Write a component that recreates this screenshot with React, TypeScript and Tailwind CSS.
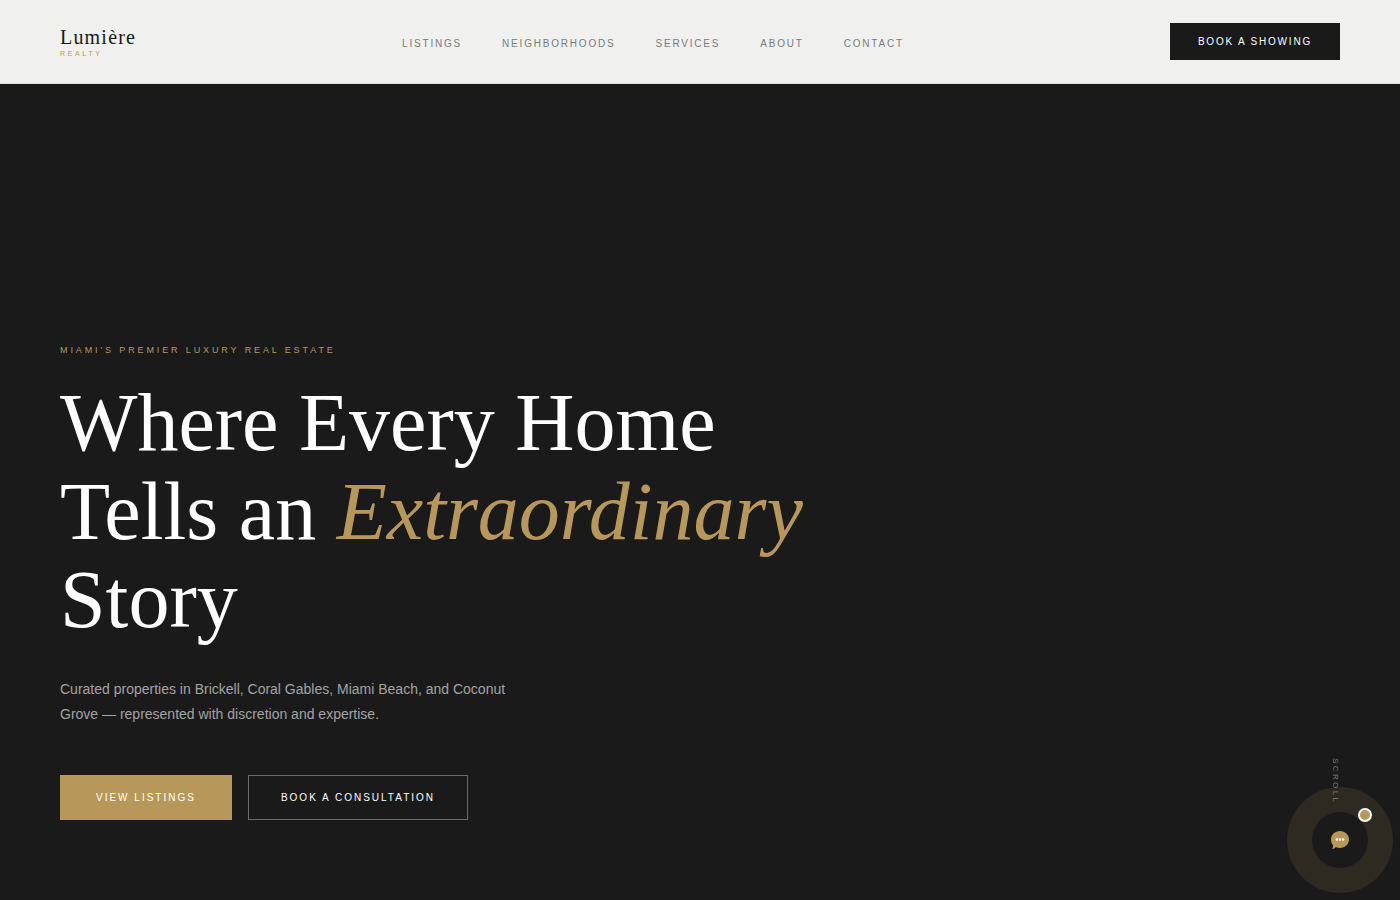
const links = ["Listings", "Neighborhoods", "Services", "About", "Contact"];

function Header() {
  return (
    <header className="flex h-21 items-center justify-between border-b border-[#e2e0dc] bg-[#f0f0ee] px-15">
      <a href="#top" className="flex flex-col">
        <span className="font-['Liberation_Serif',serif] text-[20px] leading-6 tracking-[0.06em] text-[#1a1a1a]">
          Lumière
        </span>
        <span className="text-[7px] leading-[10px] tracking-[0.38em] text-[#b8985a] uppercase">Realty</span>
      </a>
      <nav aria-label="Main" className="flex gap-10 pt-1">
        {links.map((label) => (
          <a
            key={label}
            href={`#${label.toLowerCase()}`}
            className="text-[10px] leading-4 tracking-[0.18em] text-[#7a7a7a] uppercase"
          >
            {label}
          </a>
        ))}
      </nav>
      <button
        type="button"
        className="bg-[#1a1a1a] px-7 py-3 text-[10px] leading-[13px] tracking-[0.18em] text-white uppercase"
      >
        Book a Showing
      </button>
    </header>
  );
}

function Hero() {
  return (
    <section className="flex grow flex-col justify-end bg-[#1a1a1a] px-15 pb-20">
      <p className="mb-6 text-[9px] leading-[10px] tracking-[0.32em] text-[#b8985a] uppercase">
        Miami's Premier Luxury Real Estate
      </p>
      <h1 className="mb-8 max-w-195 font-['Liberation_Serif',serif] text-[82px] leading-[1.08] text-white">
        Where Every Home Tells an <em className="text-[#b8985a]">Extraordinary</em> Story
      </h1>
      <p className="mb-12 max-w-115 text-[14px] leading-[25px] text-[#a3a3a3]">
        Curated properties in Brickell, Coral Gables, Miami Beach, and Coconut Grove — represented with
        discretion and expertise.
      </p>
      <div className="flex gap-4">
        <button
          type="button"
          className="bg-[#b8985a] px-9 py-4 text-[10px] leading-[13px] tracking-[0.2em] text-white uppercase"
        >
          View Listings
        </button>
        <button
          type="button"
          className="border border-[#6b6b6b] px-8 py-[15px] text-[10px] leading-[13px] tracking-[0.2em] text-white uppercase"
        >
          Book a Consultation
        </button>
      </div>
    </section>
  );
}

function ChatButton() {
  return (
    <button
      type="button"
      aria-label="Open chat"
      className="fixed right-8 bottom-8 flex size-14 items-center justify-center rounded-full bg-[#1a1a1a] shadow-[0_0_0_25px_rgba(184,152,90,0.13)]"
    >
      <svg viewBox="0 0 18 18" className="size-[18px] overflow-visible" aria-hidden="true">
        <path
          d="M9 0C14 0 18 3.7 18 8.5C18 13.3 14 17 9 17C7.5 17 6.1 16.7 4.9 16.1C3.9 17.2 2.6 18 1.1 18.2C1.9 17 2.2 15.6 2 14.1C0.7 12.6 0 10.6 0 8.5C0 3.7 4 0 9 0Z"
          fill="#b8985a"
        />
        <circle cx="5.9" cy="8.5" r="1.25" fill="white" />
        <circle cx="9" cy="8.5" r="1.25" fill="white" />
        <circle cx="12.1" cy="8.5" r="1.25" fill="white" />
      </svg>
      <span className="absolute -top-1 -right-1 size-3.5 rounded-full border-2 border-white bg-[#b8985a]" />
    </button>
  );
}

export default function App() {
  return (
    <div
      id="top"
      className="relative flex min-h-screen flex-col bg-[#1a1a1a] font-['Liberation_Sans',sans-serif]"
    >
      <Header />
      <Hero />
      <span className="absolute right-15 bottom-24 text-[8px] leading-[10px] tracking-[0.3em] text-[#7a7a7a] uppercase [writing-mode:vertical-rl]">
        Scroll
      </span>
      <ChatButton />
    </div>
  );
}
